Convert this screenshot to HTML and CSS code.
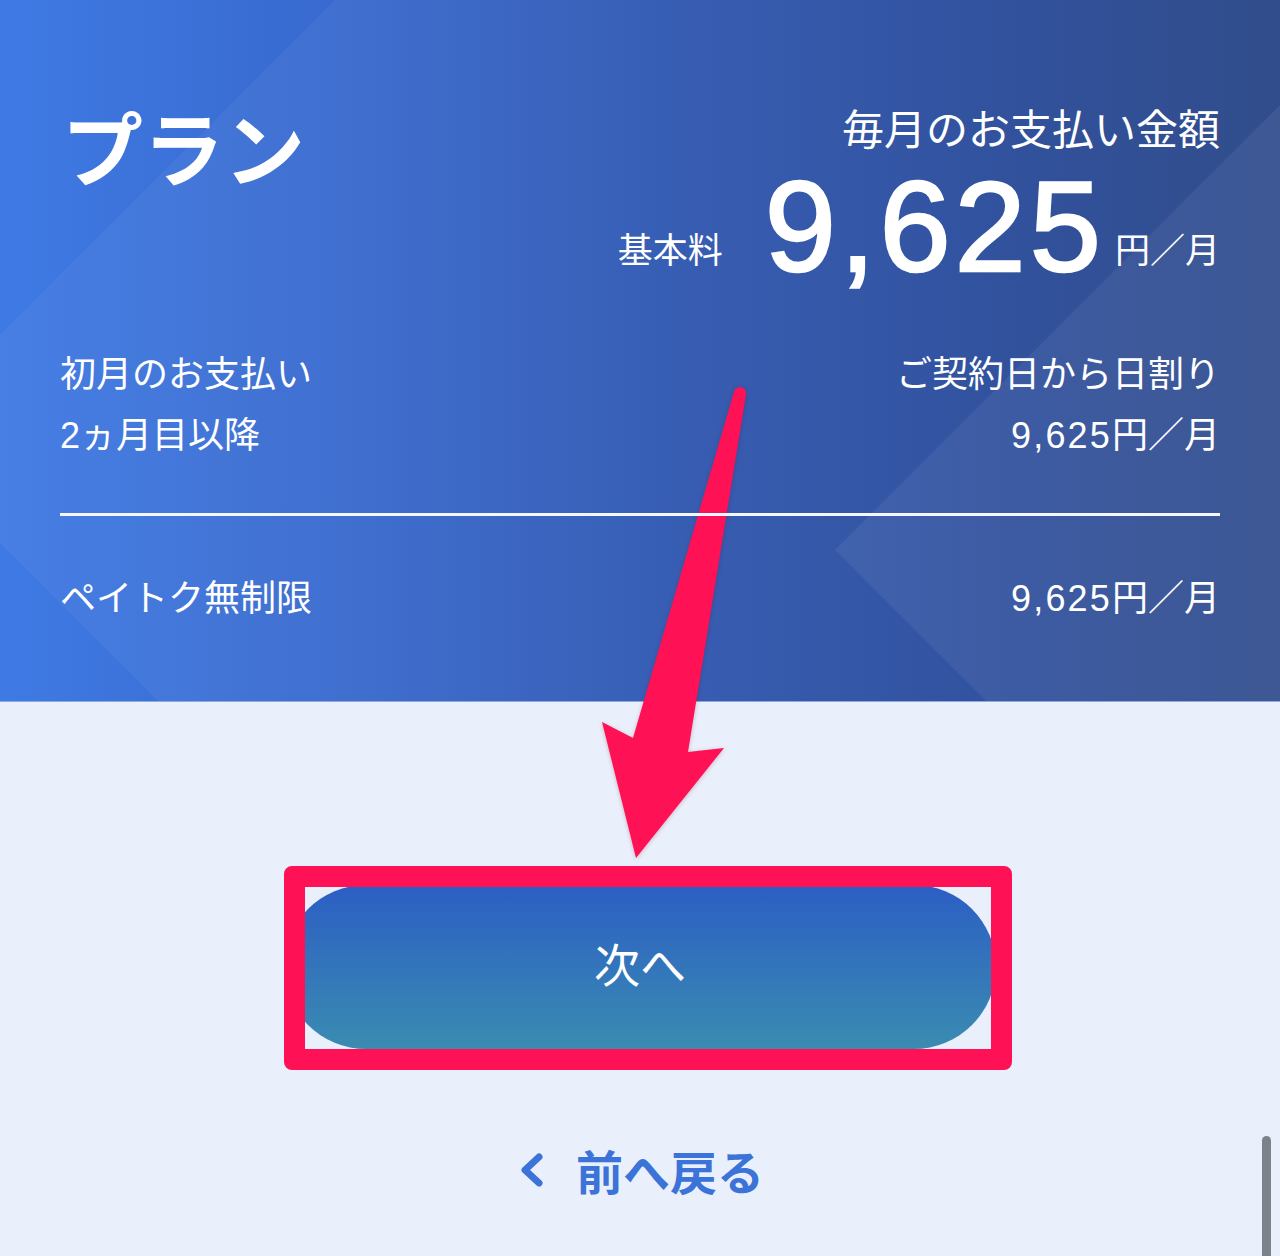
FILE: index.html
```html
<!DOCTYPE html>
<html lang="ja">
<head>
<meta charset="utf-8">
<title>プラン</title>
<link rel="stylesheet" href="styles.css">
</head>
<body>
<div class="page">
  <section class="hero">
    <div class="hero-inner">
      <div class="head">
        <h1 class="title">プラン</h1>
        <div class="monthly">
          <div class="monthly-label">毎月のお支払い金額</div>
          <div class="price">
            <span class="price-label">基本料</span>
            <span class="price-num">9,625</span>
            <span class="price-unit">円／月</span>
          </div>
        </div>
      </div>
      <div class="rows">
        <div class="row"><span>初月のお支払い</span><span>ご契約日から日割り</span></div>
        <div class="row"><span><span class="digit">2</span>ヵ月目以降</span><span><span class="num">9,625</span>円／月</span></div>
      </div>
      <hr class="divider">
      <div class="row"><span>ペイトク無制限</span><span><span class="num">9,625</span>円／月</span></div>
    </div>
  </section>

  <section class="actions">
    <button class="next-btn" type="button">次へ</button>
    <a class="back-link" href="#">
      <svg class="back-icon" width="30" height="34" viewBox="0 0 30 34"><path d="M23 4 L9 17 L23 30" fill="none" stroke="#3b73d8" stroke-width="7" stroke-linecap="round" stroke-linejoin="round"/></svg>
      <span>前へ戻る</span>
    </a>
  </section>

  <div class="highlight-box"></div>
  <svg class="arrow" width="170" height="490" viewBox="590 380 170 490">
    <polygon points="734,392 746,394 688,752 724,748 636,858 602,722 633,738" fill="#ff1155"/>
    <circle cx="740" cy="393" r="6" fill="#ff1155"/>
  </svg>
  <div class="scrollbar"></div>
</div>
</body>
</html>
```
FILE: styles.css
```css
* { box-sizing: border-box; }
html, body { margin: 0; padding: 0; }
body {
  background: #eaf0fb;
  font-family: "Noto Sans CJK JP", "Liberation Sans", sans-serif;
  color: #fff;
}
.page {
  position: relative;
  width: 1280px;
  height: 1256px;
  overflow: hidden;
}
.hero {
  position: relative;
  height: 702px;
  overflow: hidden;
  background: linear-gradient(90deg, #3f7ae4 0%, #3767cb 30%, #2e55ae 55%, #284a98 80%, #284686 100%);
  border-bottom: 1px solid #8ea9de;
}
.hero::before {
  content: "";
  position: absolute;
  left: 186px;
  top: -261px;
  width: 1400px;
  height: 1400px;
  transform: rotate(45deg);
  background: rgba(255, 255, 255, 0.045);
}
.hero::after {
  content: "";
  position: absolute;
  left: 1042px;
  top: 50px;
  width: 1000px;
  height: 1000px;
  transform: rotate(45deg);
  background: rgba(190, 205, 230, 0.09);
}
.hero-inner {
  position: relative;
  z-index: 1;
  padding: 104px 60px 0 60px;
}
.head {
  display: flex;
  justify-content: space-between;
  align-items: flex-start;
}
.title {
  margin: 0;
  font-size: 81px;
  font-weight: 700;
  line-height: 1;
  padding-left: 2px;
}
.monthly {
  display: flex;
  flex-direction: column;
  align-items: flex-end;
}
.monthly-label {
  font-size: 42px;
  line-height: 1;
  font-weight: 400;
  margin-top: 2px;
}
.price {
  display: flex;
  align-items: flex-end;
  margin-top: 15px;
}
.price-label, .price-unit {
  font-size: 35px;
  line-height: 1;
  margin-bottom: 26px;
}
.price-num {
  font-family: "Liberation Sans", sans-serif;
  font-weight: 400;
  -webkit-text-stroke: 2.5px #fff;
  font-size: 128px;
  letter-spacing: 4px;
  line-height: 1;
  margin: 0 10px 0 42px;
}
.rows {
  margin-top: 50px;
}
.row {
  display: flex;
  justify-content: space-between;
  font-size: 36px;
  line-height: 61px;
  height: 61px;
}
.num {
  font-family: "Liberation Sans", sans-serif;
  letter-spacing: 0.06em;
}
.digit {
  font-family: "Liberation Sans", sans-serif;
}
.divider {
  margin: 50px 0 49px 0;
  border: 0;
  height: 3px;
  background: #f4f7ff;
}
.actions {
  display: flex;
  flex-direction: column;
  align-items: center;
  padding-top: 183px;
}
.next-btn {
  width: 712px;
  height: 164px;
  border: 0;
  border-radius: 82px;
  background: linear-gradient(180deg, #2c5ec4 0%, #3a8cb1 100%);
  color: #fff;
  font-family: "Noto Sans CJK JP", sans-serif;
  font-size: 46px;
  font-weight: 400;
  padding: 0 0 10px 0;
}
.back-link {
  display: flex;
  align-items: center;
  gap: 30px;
  margin-top: 97px;
  color: #3b73d8;
  text-decoration: none;
  font-size: 47px;
  font-weight: 700;
  line-height: 1;
}
.back-icon { display: block; }
.highlight-box {
  position: absolute;
  left: 284px;
  top: 866px;
  width: 728px;
  height: 204px;
  border: 21px solid #ff1155;
  border-radius: 8px;
}
.arrow {
  position: absolute;
  left: 590px;
  top: 380px;
  filter: drop-shadow(0 1px 2px rgba(120, 0, 40, 0.25));
}
.scrollbar {
  position: absolute;
  left: 1262px;
  top: 1136px;
  width: 9px;
  height: 130px;
  border-radius: 5px;
  background: #7d8189;
}
```
